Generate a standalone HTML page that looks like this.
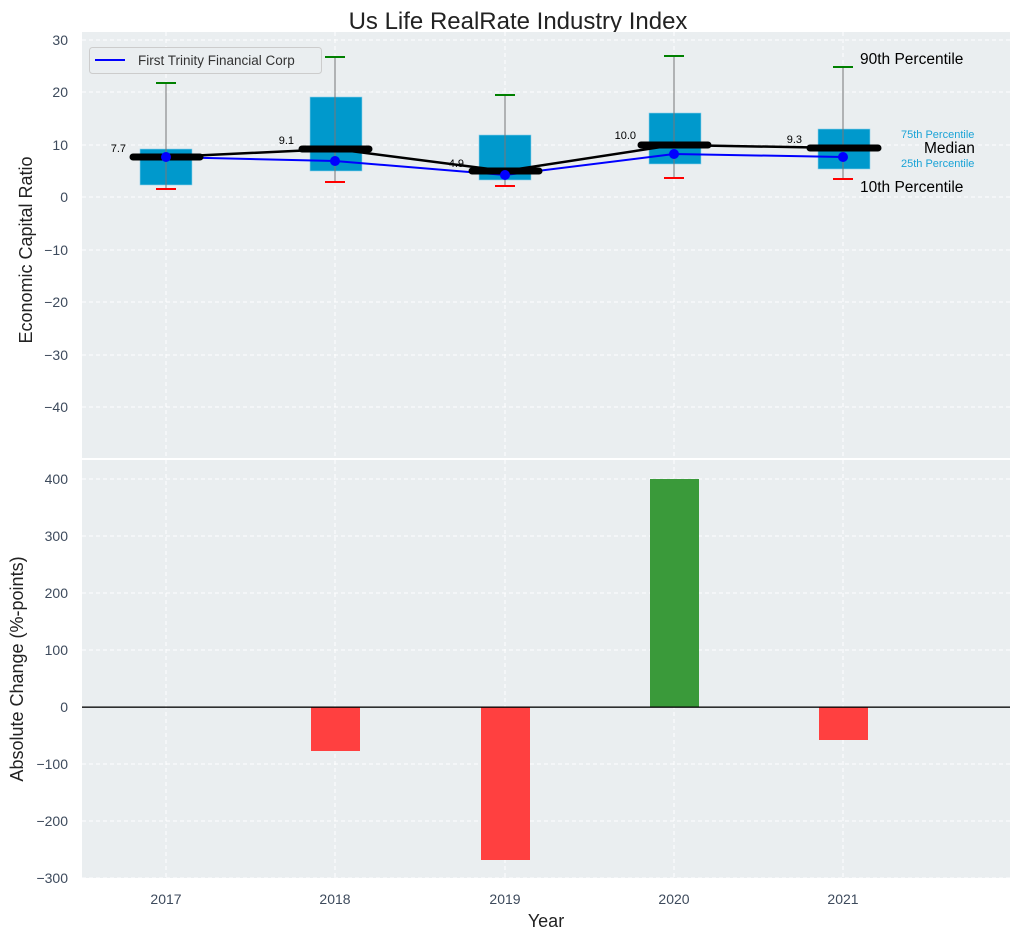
<!DOCTYPE html>
<html><head><meta charset="utf-8"><style>
html,body{margin:0;padding:0;background:#fff;}
svg{display:block;font-family:"Liberation Sans",sans-serif;}
.t{fill:#3d4a5c;font-size:14px;}
.g{stroke:#fff;stroke-dasharray:4,3;stroke-width:1;}
</style></head><body>
<svg width="1021" height="940" viewBox="0 0 1021 940">
<text x="518" y="29" text-anchor="middle" font-size="24" fill="#222">Us Life RealRate Industry Index</text>
<rect x="82" y="32" width="928" height="426" fill="#eaeef0"/>
<g class="g">
<line x1="166" y1="32" x2="166" y2="458"/><line x1="335" y1="32" x2="335" y2="458"/><line x1="505" y1="32" x2="505" y2="458"/><line x1="674" y1="32" x2="674" y2="458"/><line x1="843" y1="32" x2="843" y2="458"/>
<line x1="82" y1="40" x2="1010" y2="40"/><line x1="82" y1="92" x2="1010" y2="92"/><line x1="82" y1="145" x2="1010" y2="145"/><line x1="82" y1="197" x2="1010" y2="197"/><line x1="82" y1="250" x2="1010" y2="250"/><line x1="82" y1="302" x2="1010" y2="302"/><line x1="82" y1="355" x2="1010" y2="355"/><line x1="82" y1="407" x2="1010" y2="407"/>
</g>
<g class="t" text-anchor="end">
<text x="68" y="45">30</text><text x="68" y="97">20</text><text x="68" y="150">10</text><text x="68" y="202">0</text><text x="68" y="255">−10</text><text x="68" y="307">−20</text><text x="68" y="360">−30</text><text x="68" y="412">−40</text>
</g>
<text transform="translate(32,250) rotate(-90)" text-anchor="middle" font-size="18" fill="#222">Economic Capital Ratio</text>
<g fill="#0099cc" stroke="#8fd0ea" stroke-width="0.6">
<rect x="140" y="149" width="52" height="36"/>
<rect x="310" y="97" width="52" height="74"/>
<rect x="479" y="135" width="52" height="45"/>
<rect x="649" y="113" width="52" height="51"/>
<rect x="818" y="129" width="52" height="40"/>
</g>
<g stroke="#777" stroke-width="1">
<line x1="166" y1="83" x2="166" y2="188"/><line x1="335" y1="57" x2="335" y2="182"/><line x1="505" y1="94" x2="505" y2="186"/><line x1="674" y1="56" x2="674" y2="178"/><line x1="843" y1="67" x2="843" y2="179"/>
</g>
<g stroke="green" stroke-width="2">
<line x1="156" y1="83" x2="176" y2="83"/><line x1="325" y1="57" x2="345" y2="57"/><line x1="495" y1="95" x2="515" y2="95"/><line x1="664" y1="56" x2="684" y2="56"/><line x1="833" y1="67" x2="853" y2="67"/>
</g>
<g stroke="red" stroke-width="2">
<line x1="156" y1="189" x2="176" y2="189"/><line x1="325" y1="182" x2="345" y2="182"/><line x1="495" y1="186" x2="515" y2="186"/><line x1="664" y1="178" x2="684" y2="178"/><line x1="833" y1="179" x2="853" y2="179"/>
</g>
<polyline points="166,157 335,161 505,175 674,154 843,157" fill="none" stroke="blue" stroke-width="2"/>
<polyline points="166,157 335,149 505,171 674,145 843,148" fill="none" stroke="#000" stroke-width="2.5"/>
<g stroke="#000" stroke-width="7" stroke-linecap="round">
<line x1="133" y1="157" x2="200" y2="157"/><line x1="302" y1="149" x2="369" y2="149"/><line x1="472" y1="171" x2="539" y2="171"/><line x1="641" y1="145" x2="708" y2="145"/><line x1="810" y1="148" x2="878" y2="148"/>
</g>
<g fill="blue"><circle cx="166" cy="157" r="5"/><circle cx="335" cy="161" r="5"/><circle cx="505" cy="175" r="5"/><circle cx="674" cy="154" r="5"/><circle cx="843" cy="157" r="5"/></g>
<g font-size="11" fill="#000" text-anchor="end">
<text x="126" y="152">7.7</text><text x="294" y="144">9.1</text><text x="464" y="167">4.9</text><text x="636" y="139">10.0</text><text x="802" y="143">9.3</text>
</g>
<text x="860" y="64" font-size="15.5" fill="#000">90th Percentile</text>
<text x="860" y="192" font-size="15.5" fill="#000">10th Percentile</text>
<text x="901" y="138" font-size="11" fill="#1aa3d6">75th Percentile</text>
<text x="901" y="167" font-size="11" fill="#1aa3d6">25th Percentile</text>
<text x="924" y="153" font-size="15.5" fill="#000">Median</text>
<rect x="89.5" y="47.5" width="232" height="26" rx="3" fill="#eaeef0" stroke="#ccc"/>
<line x1="95" y1="60" x2="125" y2="60" stroke="blue" stroke-width="2"/>
<text x="138" y="65" font-size="13.5" fill="#333">First Trinity Financial Corp</text>
<rect x="82" y="460" width="928" height="418" fill="#eaeef0"/>
<g class="g">
<line x1="166" y1="460" x2="166" y2="878"/><line x1="335" y1="460" x2="335" y2="878"/><line x1="505" y1="460" x2="505" y2="878"/><line x1="674" y1="460" x2="674" y2="878"/><line x1="843" y1="460" x2="843" y2="878"/>
<line x1="82" y1="479" x2="1010" y2="479"/><line x1="82" y1="536" x2="1010" y2="536"/><line x1="82" y1="593" x2="1010" y2="593"/><line x1="82" y1="650" x2="1010" y2="650"/><line x1="82" y1="764" x2="1010" y2="764"/><line x1="82" y1="821" x2="1010" y2="821"/><line x1="82" y1="878" x2="1010" y2="878"/>
</g>
<g class="t" text-anchor="end">
<text x="68" y="484">400</text><text x="68" y="541">300</text><text x="68" y="598">200</text><text x="68" y="655">100</text><text x="68" y="712">0</text><text x="68" y="769">−100</text><text x="68" y="826">−200</text><text x="68" y="883">−300</text>
</g>
<text transform="translate(23,669) rotate(-90)" text-anchor="middle" font-size="18" fill="#222">Absolute Change (%-points)</text>
<g fill="#ff4040">
<rect x="311" y="707" width="49" height="44"/><rect x="481" y="707" width="49" height="153"/><rect x="819" y="707" width="49" height="33"/>
</g>
<rect x="650" y="479" width="49" height="228" fill="#3a9a3a"/>
<rect x="82" y="706.5" width="928" height="1.3" fill="#000"/>
<g class="t" text-anchor="middle">
<text x="166" y="904">2017</text><text x="335" y="904">2018</text><text x="505" y="904">2019</text><text x="674" y="904">2020</text><text x="843" y="904">2021</text>
</g>
<text x="546" y="927" text-anchor="middle" font-size="18" fill="#222">Year</text>
</svg>
</body></html>
